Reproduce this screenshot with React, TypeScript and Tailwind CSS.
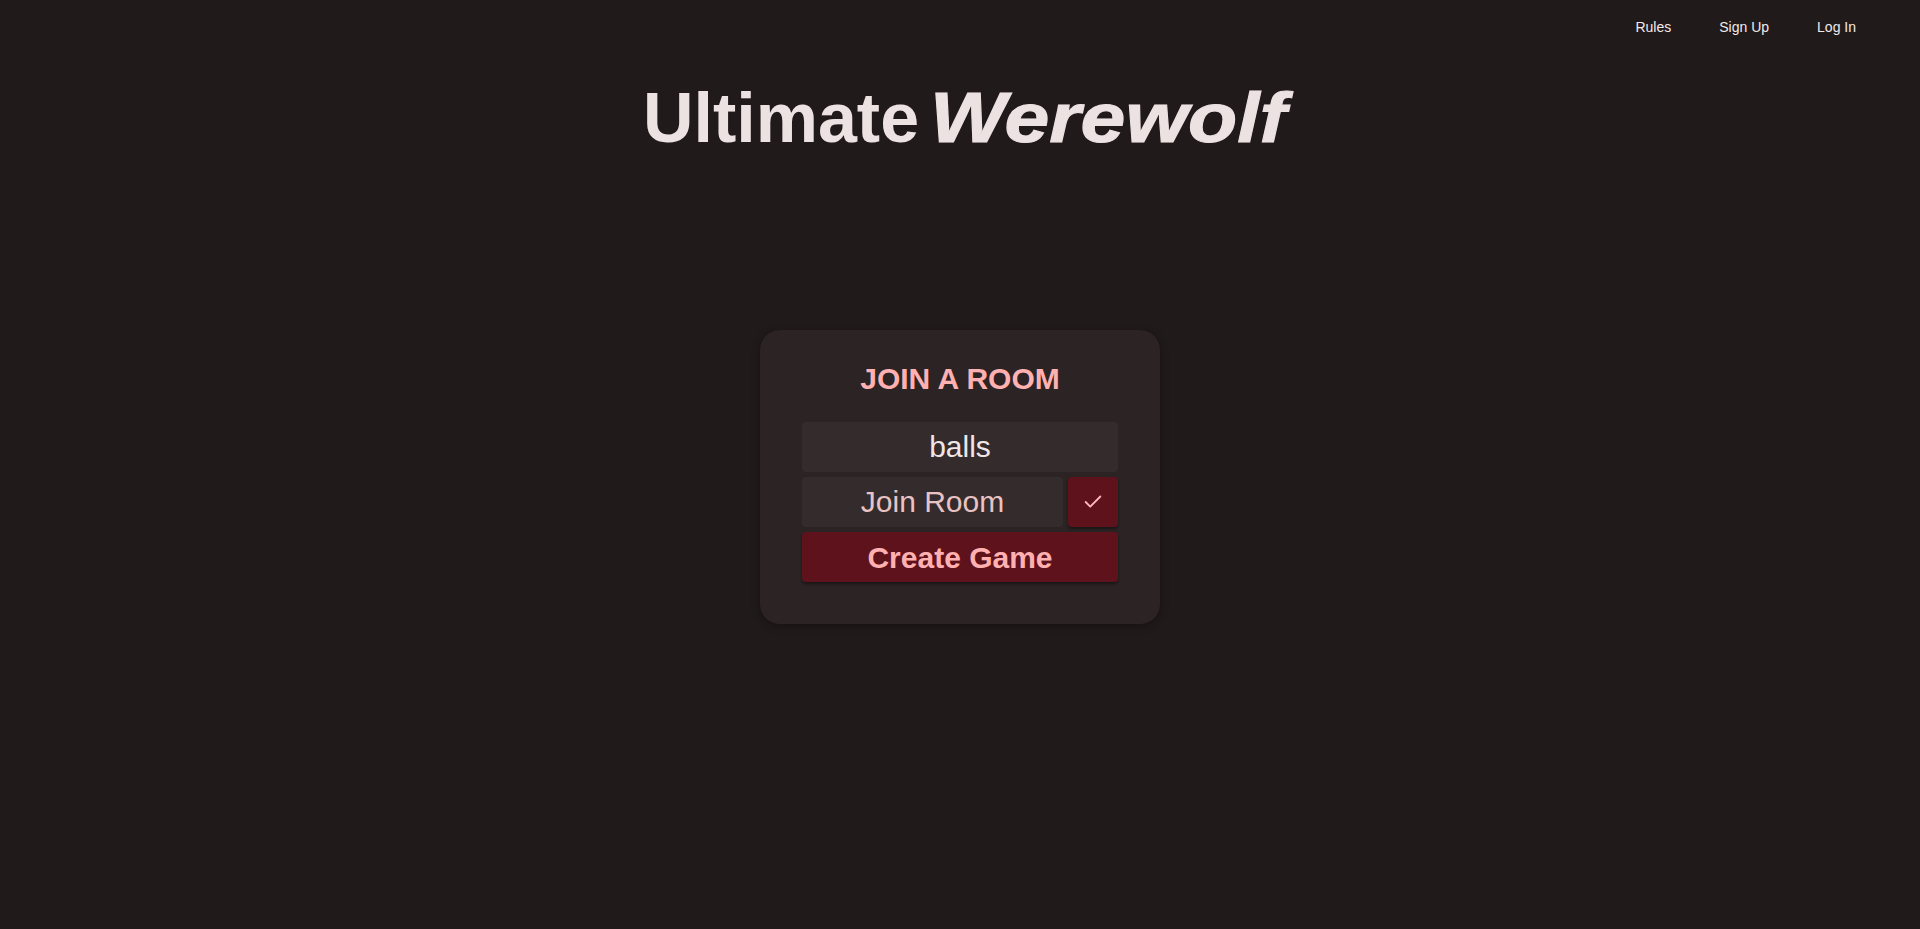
import { Check } from "lucide-react";

const navItems = ["Rules", "Sign Up", "Log In"];

const App = () => {
  return (
    <div className="min-h-screen bg-[#211a1b] font-['Liberation_Sans',Arial,sans-serif]">
      {/* Top nav */}
      <nav className="flex justify-end gap-12 pr-16 pt-[19px]">
        {navItems.map((item) => (
          <a key={item} href="#" className="text-[14px] leading-4 text-[#f2eaea]">
            {item}
          </a>
        ))}
      </nav>

      {/* Title */}
      <h1 className="mt-[43px] flex items-baseline justify-center gap-[11px] pl-[11px] text-[70px] font-bold leading-[80px] text-[#ede2e2]">
        <span>Ultimate</span>
        <span className="inline-block w-[358px] whitespace-nowrap">
          <span className="inline-block origin-left scale-x-[1.15] italic [-webkit-text-stroke:1px_#ede2e2]">
            Werewolf
          </span>
        </span>
      </h1>

      {/* Join card */}
      <div className="mx-auto mt-[172px] w-[400px] rounded-[20px] bg-[#2b2324] px-[42px] pt-8 pb-[42px] shadow-[0_2px_8px_rgba(0,0,0,0.35)]">
        <h2 className="mb-[26px] text-center text-[30px] font-bold leading-[34px] text-[#ffb1b1]">
          JOIN A ROOM
        </h2>
        <div className="flex flex-col gap-[5px]">
          <input
            readOnly
            defaultValue="balls"
            className="h-[50px] w-full rounded bg-[#342b2c] text-center text-[30px] text-[#f0e6e6] outline-none"
          />
          <div className="flex gap-[5px]">
            <input
              placeholder="Join Room"
              className="h-[50px] min-w-0 flex-1 rounded bg-[#342b2c] text-center text-[30px] text-[#f0e6e6] outline-none placeholder:text-[#e9c3c3]"
            />
            <button className="flex h-[50px] w-[50px] items-center justify-center rounded bg-[#5e121c] text-[#ffb8c0] shadow-[0_2px_3px_rgba(0,0,0,0.4)]">
              <Check size={22} strokeWidth={2} />
            </button>
          </div>
          <button className="h-[50px] w-full rounded bg-[#5e121c] text-[30px] font-bold text-[#ffb1b1] shadow-[0_2px_3px_rgba(0,0,0,0.4)]">
            Create Game
          </button>
        </div>
      </div>
    </div>
  );
};

export default App;
